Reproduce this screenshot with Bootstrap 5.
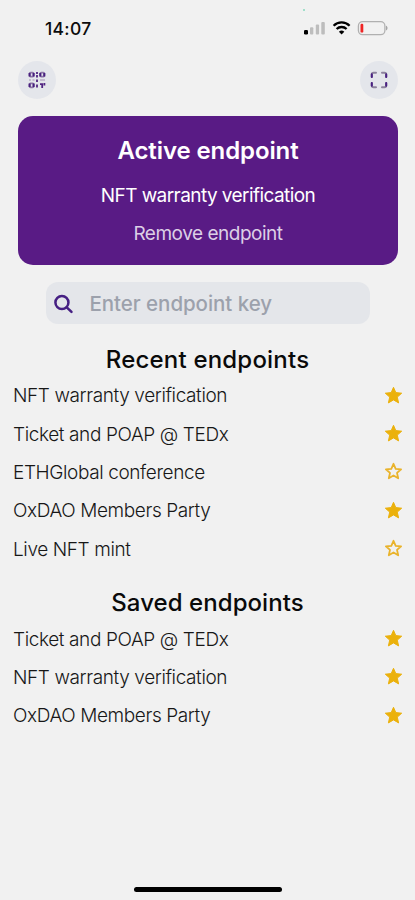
<!DOCTYPE html>
<html lang="en">
<head>
<meta charset="utf-8">
<meta name="viewport" content="width=device-width, initial-scale=1">
<title>Endpoints</title>
<link href="https://cdn.jsdelivr.net/npm/bootstrap@5.3.0/dist/css/bootstrap.min.css" rel="stylesheet">
<style>
  body { background: #f1f1f1; color: #0c0c0c; font-family: Inter, "Liberation Sans", sans-serif; height: 900px; overflow: hidden; }
  svg { display: block; flex: none; }
  .status-bar { height: 60.5px; padding: 0 27px 4px 45px; }
  .clock { font-size: 17.5px; font-weight: 550; letter-spacing: .3px; line-height: 24px; padding-top: 1px; }
  .activity-dot { width: 2px; height: 2px; background: #86d9bd; left: 303px; top: 9px; }
  .tools { padding: 0 17px 0 18px; height: 55.5px; }
  .round-btn { width: 38px; height: 38px; background: #e4e6eb; }
  .active-card { margin: 0 17px 0 18px; height: 148.5px; border-radius: 15px; background: #591b85; padding-top: 18px; }
  .active-title { font-size: 24px; font-weight: 600; letter-spacing: -.1px; line-height: 34px; }
  .active-name { font-size: 19px; line-height: 24px; margin-top: 16px; letter-spacing: -.57px; }
  .active-remove { font-size: 19px; line-height: 24px; margin-top: 14px; letter-spacing: -.48px; color: #dccfe6; }
  .search-box { margin: 17.5px 45px 0 46px; height: 42px; border-radius: 12px; background: #e4e6ea; padding-left: 7px; }
  .search-input, .search-input:focus { font-size: 20.5px; font-weight: 500; letter-spacing: -.05px; line-height: 26px; padding: 2px 0 0; margin-left: 15.5px; background: none; border: 0; box-shadow: none; }
  .search-input::placeholder { color: #9ca1ac; opacity: 1; }
  .section-title { font-size: 24px; font-weight: 500; line-height: 32px; color: #0a0a0a; }
  .recent { margin-top: 20px; }
  .recent .section-title { letter-spacing: .2px; }
  .saved { margin-top: 19.5px; }
  .saved .section-title { letter-spacing: .06px; }
  .entry { height: 38.35px; padding: 0 12px 0 13px; font-size: 19px; line-height: 24px; font-weight: 350; letter-spacing: -.39px; color: #171717; }
  .entry span { padding-top: 2.4px; }
  .home-bar { width: 148px; height: 5px; background: #000; bottom: 8.5px; left: 134px; }
</style>
<script src="https://cdn.jsdelivr.net/npm/bootstrap@5.3.0/dist/js/bootstrap.bundle.min.js"></script>
</head>
<body class="position-relative">
<svg width="0" height="0" class="position-absolute" aria-hidden="true">
  <symbol id="star" viewBox="0 0 19 19"><path d="M9.5 1.3 11.8 6.6 17.7 7.2 13.3 11.1 14.6 16.9 9.5 13.9 4.4 16.9 5.7 11.1 1.3 7.2 7.2 6.6Z" fill="#ebb10c" stroke="#ebb10c" stroke-width="1" stroke-linejoin="round"/></symbol>
  <symbol id="star-open" viewBox="0 0 19 19"><path d="M9.5 1.8 11.7 6.8 17.1 7.3 13 10.9 14.2 16.3 9.5 13.5 4.8 16.3 6 10.9 1.9 7.3 7.3 6.8Z" fill="none" stroke="#e9b32b" stroke-width="1.8" stroke-linejoin="round"/></symbol>
</svg>
<header>
  <div class="activity-dot position-absolute rounded-circle"></div>
  <div class="status-bar d-flex align-items-center justify-content-between">
    <span class="clock">14:07</span>
    <svg width="84" height="18" viewBox="0 0 84 18">
      <rect x="0" y="11" width="4" height="4.5" rx="1.2" fill="#000"/>
      <rect x="6" y="8.3" width="3.3" height="7.2" rx="1" fill="#bdbdbd"/>
      <rect x="11.8" y="5.5" width="3.3" height="10" rx="1" fill="#bdbdbd"/>
      <rect x="17.3" y="3" width="3.5" height="12.5" rx="1" fill="#bdbdbd"/>
      <g fill="none" stroke="#000" stroke-width="2.3"><path d="M29.6 6.7a11.3 11.3 0 0 1 16 0M32.6 10a7.2 7.2 0 0 1 10 0"/></g>
      <path d="M37.6 15.5 34.9 12.8a4 4 0 0 1 5.4 0Z" fill="#000"/>
      <rect x="54.4" y="2.7" width="26.5" height="13" rx="4.2" fill="none" stroke="#b0b0b0" stroke-width="1.3"/>
      <rect x="56.5" y="4.8" width="2.8" height="8.8" rx="1.2" fill="#ef2525"/>
      <path d="M82 6.8c2 .7 2 3.9 0 4.6Z" fill="#a5a5a5"/>
    </svg>
  </div>
  <div class="tools d-flex justify-content-between align-items-start">
    <button type="button" class="round-btn btn p-0 border-0 rounded-circle d-flex align-items-center justify-content-center" aria-label="QR code">
      <svg width="18" height="18" viewBox="0 0 18 18" fill="none">
        <g stroke="#8d76a8" stroke-width="1.8"><rect x="1.6" y="1.6" width="4" height="4" rx="1"/><rect x="12.3" y="1.6" width="4" height="4" rx="1"/><rect x="1.6" y="12.3" width="4" height="4" rx="1"/></g>
        <path d="M1.6 2v3.4M5.6 2v3.4M12.3 2v3.4M16.3 2v3.4M1.6 12.6V16M5.6 12.6V16" stroke="#48207f" stroke-width="2"/>
        <path d="M9 1v2M9 4v2.5M9 8.5v2.5M9 13.5v3M12 13.2h2.2v2M16.4 12v2.5M14.2 15v2" stroke="#512582" stroke-width="1.8"/>
        <path d="M1 9h2M4.5 9h2M12 9h5" stroke="#b9aec8" stroke-width="1.7"/>
      </svg>
    </button>
    <button type="button" class="round-btn btn p-0 border-0 rounded-circle d-flex align-items-center justify-content-center" aria-label="Scan">
      <svg width="18" height="18" viewBox="0 0 18 18" fill="none" stroke-width="2" stroke-linecap="round">
        <path d="M1.8 6V3.5Q1.8 1.8 3.5 1.8H6M12 1.8h2.5q1.7 0 1.7 1.7V6M16.2 12v2.5q0 1.7-1.7 1.7H12M6 16.2H3.5q-1.7 0-1.7-1.7V12" stroke="#8d839d"/>
        <path d="M1.8 6V3.2M16.2 6V3.2M1.8 12v2.8M16.2 12v2.8" stroke="#4a2183"/>
      </svg>
    </button>
  </div>
</header>
<main>
  <section class="active-card text-white text-center">
    <h1 class="active-title mb-0">Active endpoint</h1>
    <div class="active-name">NFT warranty verification</div>
    <div class="active-remove" role="button">Remove endpoint</div>
  </section>
  <div class="search-box d-flex align-items-center">
    <svg width="21" height="21" viewBox="0 0 20 20" fill="none" stroke="#462083" stroke-width="2.4" stroke-linecap="round"><circle cx="8.5" cy="9" r="6.2"/><path d="m13.1 13.6 4.5 4.4"/></svg>
    <input class="search-input form-control" type="text" placeholder="Enter endpoint key" aria-label="Enter endpoint key">
  </div>
  <section class="recent">
    <h2 class="section-title text-center mb-0">Recent endpoints</h2>
    <ul class="list-unstyled mb-0">
      <li class="entry d-flex align-items-center justify-content-between"><span>NFT warranty verification</span><svg width="19" height="19"><use href="#star"/></svg></li>
      <li class="entry d-flex align-items-center justify-content-between"><span>Ticket and POAP @ TEDx</span><svg width="19" height="19"><use href="#star"/></svg></li>
      <li class="entry d-flex align-items-center justify-content-between"><span>ETHGlobal conference</span><svg width="19" height="19"><use href="#star-open"/></svg></li>
      <li class="entry d-flex align-items-center justify-content-between"><span>OxDAO Members Party</span><svg width="19" height="19"><use href="#star"/></svg></li>
      <li class="entry d-flex align-items-center justify-content-between"><span>Live NFT mint</span><svg width="19" height="19"><use href="#star-open"/></svg></li>
    </ul>
  </section>
  <section class="saved">
    <h2 class="section-title text-center mb-0">Saved endpoints</h2>
    <ul class="list-unstyled mb-0">
      <li class="entry d-flex align-items-center justify-content-between"><span>Ticket and POAP @ TEDx</span><svg width="19" height="19"><use href="#star"/></svg></li>
      <li class="entry d-flex align-items-center justify-content-between"><span>NFT warranty verification</span><svg width="19" height="19"><use href="#star"/></svg></li>
      <li class="entry d-flex align-items-center justify-content-between"><span>OxDAO Members Party</span><svg width="19" height="19"><use href="#star"/></svg></li>
    </ul>
  </section>
</main>
<div class="home-bar position-absolute rounded-pill"></div>
</body>
</html>
